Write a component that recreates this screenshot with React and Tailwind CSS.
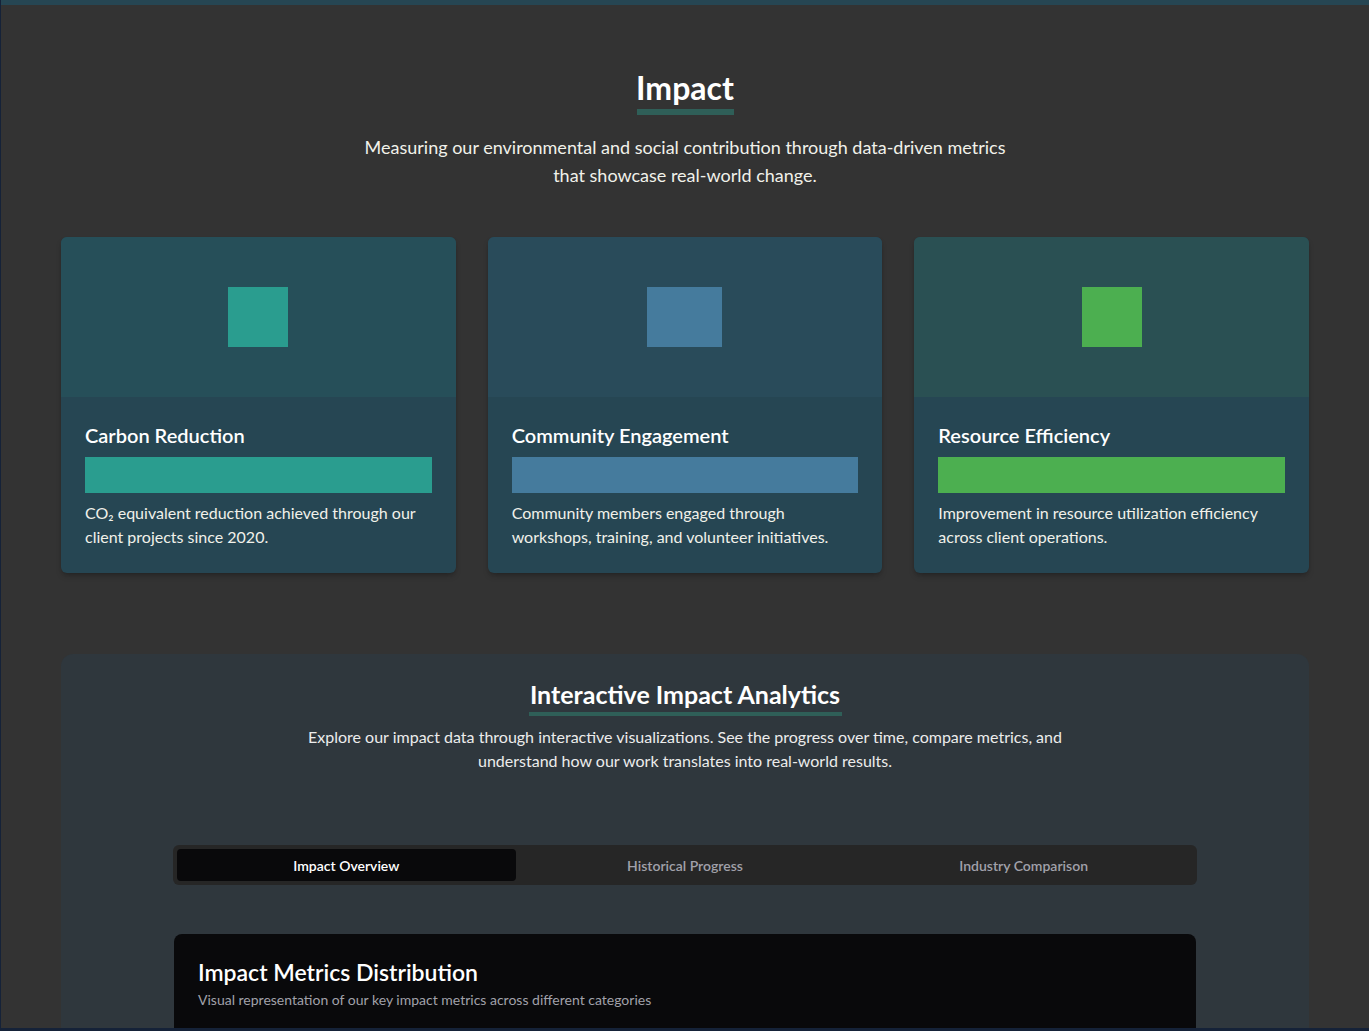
const METRICS = [
  {
    title: 'Carbon Reduction',
    color: 'bg-[#2a9d8f]',
    tint: 'bg-[#264f59]',
    iconW: 'w-[60px]',
    body: 'CO₂ equivalent reduction achieved through our client projects since 2020.',
  },
  {
    title: 'Community Engagement',
    color: 'bg-[#457b9d]',
    tint: 'bg-[#294b5a]',
    iconW: 'w-[75px]',
    body: 'Community members engaged through workshops, training, and volunteer initiatives.',
  },
  {
    title: 'Resource Efficiency',
    color: 'bg-[#4caf50]',
    tint: 'bg-[#2a5053]',
    iconW: 'w-[60px]',
    body: 'Improvement in resource utilization efficiency across client operations.',
  },
];

const TABS = ['Impact Overview', 'Historical Progress', 'Industry Comparison'];

function MetricCard({ metric }) {
  return (
    <div className="overflow-hidden rounded-md bg-[#264653] shadow-md shadow-black/20">
      <div className={`flex h-[160px] items-center justify-center ${metric.tint}`}>
        <div className={`h-[60px] ${metric.iconW} ${metric.color}`} />
      </div>
      <div className="px-6 pb-6 pt-6">
        <h3 className="text-[20px] font-semibold leading-[28px] text-white">{metric.title}</h3>
        <div className={`mt-2 h-9 w-full ${metric.color}`} />
        <p className="mt-2 text-[16px] leading-6 text-[#f1f1ea]">{metric.body}</p>
      </div>
    </div>
  );
}

export default function App() {
  return (
    <div
      className="flex h-[1031px] flex-col overflow-hidden border-b-[3px] border-l border-[#152238] bg-[#333333]"
      style={{ fontFamily: 'Lato, "Noto Sans", sans-serif' }}
    >
      <div className="h-[5px] shrink-0 bg-[#264653]" />
      <div className="mx-auto w-[1248px] pt-16">
        <div className="flex flex-col items-center">
          <h2 className="text-[32px] font-bold leading-[38px] text-white">Impact</h2>
          <div className="mt-[2px] h-[6px] w-[97px] bg-[#2f5f58]" />
          <p className="mt-[18px] w-[660px] text-center text-[18px] leading-7 text-[#f1f1ea]">
            Measuring our environmental and social contribution through data-driven metrics that showcase real-world change.
          </p>
        </div>

        <div className="mt-12 grid grid-cols-3 gap-8">
          {METRICS.map((m) => (
            <MetricCard key={m.title} metric={m} />
          ))}
        </div>

        <div className="mt-[81px] rounded-xl bg-[#2f373d] px-6 pt-6 pb-10">
          <div className="flex flex-col items-center">
            <h2 className="text-[25px] font-bold leading-8 text-white">Interactive Impact Analytics</h2>
            <div className="mt-[2px] h-1 w-[313px] bg-[#2f5f58]" />
            <p className="mt-[9px] w-[780px] text-center text-[16px] leading-6 text-[#ececec]">
              Explore our impact data through interactive visualizations. See the progress over time, compare metrics, and understand how our work translates into real-world results.
            </p>
          </div>

          <div className="mx-auto mt-[72px] w-[1024px]">
            <div className="grid h-10 grid-cols-3 items-center rounded-md bg-[#262626] p-1">
              {TABS.map((t, i) => (
                <button
                  key={t}
                  className={
                    i === 0
                      ? 'h-8 rounded bg-[#09090b] text-[14px] font-semibold text-white'
                      : 'h-8 rounded text-[14px] font-semibold text-[#a1a1aa]'
                  }
                >
                  {t}
                </button>
              ))}
            </div>

            <div className="mx-px mt-[49px] rounded-lg bg-[#09090b] px-6 pt-5 pb-10">
              <h3 className="text-[23px] font-semibold leading-9 text-white">Impact Metrics Distribution</h3>
              <p className="mt-0 text-[14px] leading-5 text-[#a1a1aa]">
                Visual representation of our key impact metrics across different categories
              </p>
              <div className="h-[300px]" />
            </div>
          </div>
        </div>
      </div>
    </div>
  );
}
